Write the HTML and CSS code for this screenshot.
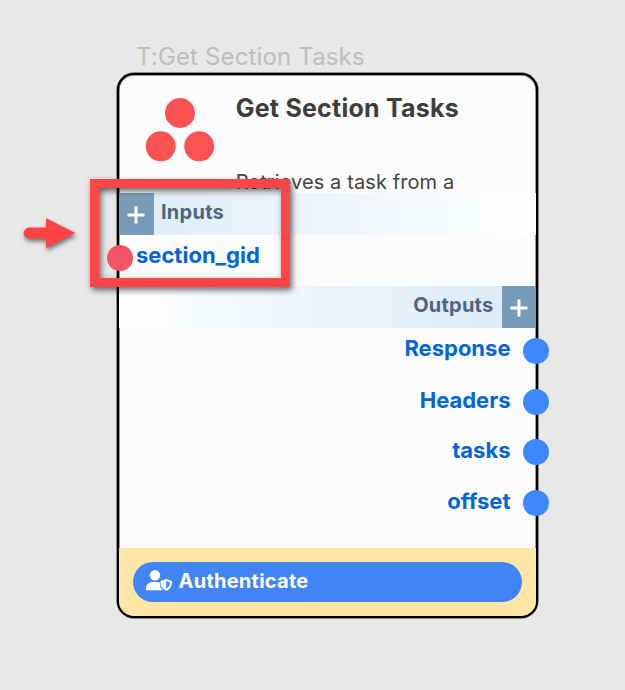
FILE: index.html
```html
<!DOCTYPE html>
<html lang="en">
<head>
<meta charset="utf-8">
<title>Get Section Tasks</title>
<link rel="stylesheet" href="styles.css">
</head>
<body>
<main class="canvas">
  <div class="node-label"><span>T:Get Section Tasks</span></div>
  <section class="node">
    <header class="head">
      <svg class="logo" viewBox="0 0 70 66" width="70" height="66">
        <circle cx="35" cy="16" r="15"/><circle cx="15.700" cy="49.300" r="15"/><circle cx="54.200" cy="49.300" r="15"/>
      </svg>
      <div class="head-text">
        <h1><span>Get Section Tasks</span></h1>
        <p><span>Retrieves a task from a</span></p>
      </div>
    </header>
    <div class="bar bar-in">
      <div class="add"><svg width="18" height="18" viewBox="0 0 18 18"><path d="M9 .5v17M.5 9h17"/></svg></div>
      <span class="bar-title">Inputs</span>
    </div>
    <div class="port port-in"><span>section_gid</span><i class="dot"></i></div>
    <div class="bar bar-out">
      <span class="bar-title">Outputs</span>
      <div class="add"><svg width="18" height="18" viewBox="0 0 18 18"><path d="M9 .5v17M.5 9h17"/></svg></div>
    </div>
    <div class="outputs">
      <div class="port"><span>Response</span><i class="dot"></i></div>
      <div class="port"><span>Headers</span><i class="dot"></i></div>
      <div class="port"><span>tasks</span><i class="dot"></i></div>
      <div class="port"><span>offset</span><i class="dot"></i></div>
    </div>
    <footer class="foot">
      <button class="auth">
        <svg width="26" height="21" viewBox="0 0 26 21">
          <circle cx="9" cy="5.200" r="5.200"/>
          <path d="M0 20.300v-1.500c0-4.200 3-6.900 7-6.900h4c1 0 2 .2 2.900.6v1.800c0 2.500 1 4.600 2.600 6H.8z"/>
          <path fill-rule="evenodd" d="M20.200 8.900l5.300 2c.3.100.5.400.5.800 0 4.200-1.700 7.500-5.800 9.100-4.100-1.600-5.800-4.900-5.800-9.100 0-.4.200-.7.500-.8zM20.200 11v7.600c2.500-1.200 3.700-3.300 3.800-6.100z"/>
        </svg>
        <span>Authenticate</span>
      </button>
    </footer>
  </section>
  <div class="callout"></div>
  <svg class="arrow" width="60" height="40" viewBox="0 0 60 40"><path d="M9 9.600h17V0l29.500 15L26 30v-9.600H9a5.400 5.400 0 0 1 0-10.800z"/></svg>
</main>
</body>
</html>
```
FILE: styles.css
```css
* { box-sizing: border-box; }
body { margin: 0; background: #e8e8e8; font-family: Inter, "Liberation Sans", sans-serif; }
.canvas { position: relative; width: 625px; height: 690px; padding: 42px 0 0 117px; overflow: hidden; }
.node-label { height: 31px; padding-left: 19px; font-size: 24px; line-height: 30px; letter-spacing: .15px; color: #bdbdbd; white-space: nowrap; }
.node { width: 421px; height: 545px; border: 2px solid #000; border-radius: 17px; background: #fcfcfc; box-shadow: 0 0 0 .5px #333, inset 0 0 0 .5px #333; display: flex; flex-direction: column; }
.head { height: 118px; flex: none; display: flex; padding-left: 26px; overflow: hidden; }
.logo { margin-top: 22px; flex: none; fill: #fb5353; }
.head-text { margin-left: 20.700px; white-space: nowrap; }
h1 { margin: 17px 0 0; font-size: 25px; line-height: 32px; font-weight: 700; letter-spacing: .24px; color: #3d3d3d; }
p { margin: 45px 0 0; font-size: 20px; line-height: 26px; letter-spacing: .1px; color: #444; }
.bar { height: 42px; flex: none; display: flex; }
.bar-in { background: linear-gradient(90deg, #dcecf8, #fff); }
.bar-out { background: linear-gradient(270deg, #d8e9f7, #fff); justify-content: flex-end; }
.add { width: 34.500px; height: 42px; background: #779bb7; display: flex; align-items: center; justify-content: center; padding: 2px 1px 0 0; }
.bar-out .add { padding-right: 0; }
.add path { stroke: #fff; stroke-width: 3; fill: none; }
.bar-title { font-size: 20px; font-weight: 700; line-height: 26px; letter-spacing: .25px; padding: 6px 8px 0 7.500px; color: #4e657e; }
.port { position: relative; display: flex; justify-content: flex-end; height: 50.500px; padding: 6px 25.500px 0 0; font-size: 22px; font-weight: 700; line-height: 28px; color: #0364db; }
.outputs .port:not(:first-child) { padding-top: 7px; }
.port-in { height: 51px; flex: none; justify-content: flex-start; padding: 6px 0 0 17px; }
.dot { position: absolute; right: -13px; top: 10px; width: 26px; height: 26px; border-radius: 50%; background: #3d88fa; }
.port-in .dot { left: -12px; right: auto; background: #f55264; }
.outputs { height: 220px; flex: none; }
.foot { flex: 1; padding: 13.500px 14px 0; background: #ffe6a7; border-radius: 0 0 15px 15px; }
.auth { width: 389px; height: 40.500px; border: 0; border-radius: 21px; background: #4084f8; color: #fff; display: flex; align-items: center; padding: 0 0 2px 13px; font: 700 20px/26px Inter, sans-serif; letter-spacing: .25px; }
.auth svg { fill: #fff; margin-right: 6.500px; flex: none; }
.callout { position: absolute; left: 90px; top: 179px; width: 200px; height: 108px; border: 9px solid #ff4545; filter: drop-shadow(2px 3px 3px rgba(0,0,0,.6)); }
.arrow { position: absolute; left: 20px; top: 218px; fill: #fd4444; overflow: visible; filter: drop-shadow(1px 3px 2px rgba(0,0,0,.5)); }
```
